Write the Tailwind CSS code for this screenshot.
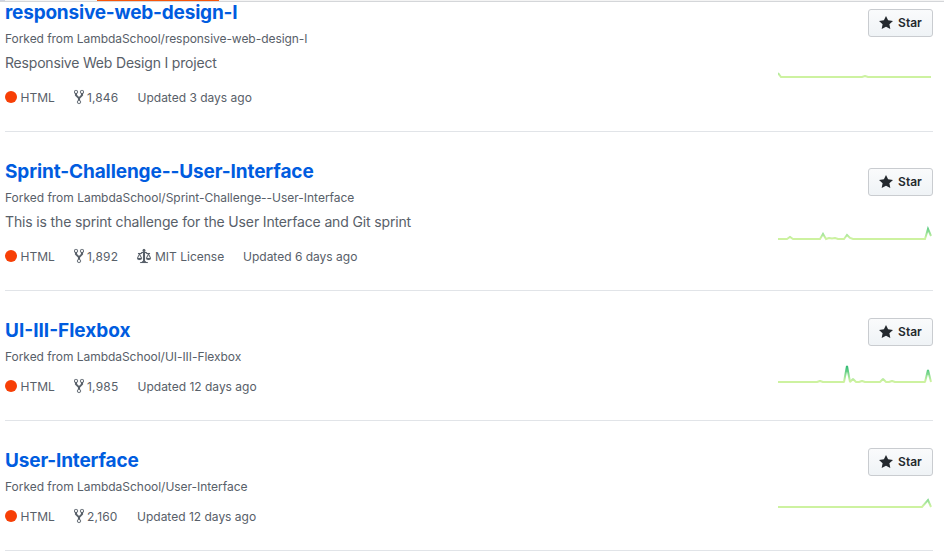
<!DOCTYPE html>
<html lang="en">
<head>
<meta charset="utf-8">
<title>Repositories</title>
<script src="https://cdn.jsdelivr.net/npm/@tailwindcss/browser@4"></script>
</head>
<body class="bg-white w-[944px] h-[553px] overflow-hidden font-['Inter','Liberation_Sans',sans-serif] text-[#586069]">
<svg class="hidden" aria-hidden="true">
  <symbol id="fork" viewBox="0 0 10 16"><path fill="currentColor" stroke="currentColor" stroke-width="0.1" fill-rule="evenodd" d="M8 1a1.993 1.993 0 00-1 3.72V6L5 8 3 6V4.72A1.993 1.993 0 002 1a1.993 1.993 0 00-1 3.72V6.5l3 3v1.78A1.993 1.993 0 005 15a1.993 1.993 0 001-3.72V9.5l3-3V4.72A1.993 1.993 0 008 1zM2 4.2C1.34 4.2.8 3.65.8 3c0-.65.55-1.2 1.2-1.2.65 0 1.2.55 1.2 1.2 0 .65-.55 1.2-1.2 1.2zm3 10c-.66 0-1.2-.55-1.2-1.2 0-.65.55-1.2 1.2-1.2.65 0 1.2.55 1.2 1.2 0 .65-.55 1.2-1.2 1.2zm3-10c-.66 0-1.2-.55-1.2-1.2 0-.65.55-1.2 1.2-1.2.65 0 1.2.55 1.2 1.2 0 .65-.55 1.2-1.2 1.2z"/></symbol>
  <symbol id="law" viewBox="0 0 14 16"><path fill="currentColor" stroke="currentColor" stroke-width="0.1" fill-rule="evenodd" d="M7 4c-.83 0-1.5-.67-1.5-1.5S6.17 1 7 1s1.5.67 1.5 1.5S7.83 4 7 4zm7 6c0 1.11-.89 2-2 2h-1c-1.11 0-2-.89-2-2l2-4h-1c-.55 0-1-.45-1-1H8v8c.42 0 1 .45 1 1h1c.42 0 1 .45 1 1H3c0-.55.58-1 1-1h1c0-.55.58-1 1-1h.03L6 5H5c0 .55-.45 1-1 1H3l2 4c0 1.11-.89 2-2 2H2c-1.11 0-2-.89-2-2l2-4H1V5h3c0-.55.45-1 1-1h4c.55 0 1 .45 1 1h3v1h-1l2 4zM2.5 7L1 10h3L2.5 7zM13 10l-1.5-3-1.5 3h3z"/></symbol>
  <symbol id="star" viewBox="0 0 14 16"><path fill="currentColor" d="M14 6l-4.9-.64L7 1 4.9 5.36 0 6l3.6 3.26L2.67 14 7 11.67 11.33 14l-.93-4.74L14 6z"/></symbol>
</svg>
<svg class="absolute size-0" aria-hidden="true"><defs>
  <linearGradient id="heat" gradientUnits="userSpaceOnUse" x1="0" y1="28" x2="0" y2="10"><stop offset="0.1" stop-color="#cdf2a0"/><stop offset="0.33" stop-color="#a5e59b"/><stop offset="0.8" stop-color="#45c47c"/><stop offset="1" stop-color="#2fb672"/></linearGradient>
</defs></svg>
<header class="h-[2px] flex items-start border-b border-[#d4d6d9] bg-[#f4f4f4]"><div class="w-[5px] h-[1px] bg-[#cfd3e0]"></div><div class="ml-[92px] w-[122px] h-[1px] bg-[#f9560b]"></div></header>
<main class="ml-[5px] w-[928px] text-[12px] leading-[18px]">
  <article class="h-[130px] flex justify-between border-b border-[#e1e4e8]">
    <div class="-mt-[5px]">
      <h3 class="text-[19px] leading-[32px] font-bold tracking-[-0.2px] text-[#005cdf]">responsive-web-design-I</h3>
      <p class="mt-[1px] tracking-[-0.05px]">Forked from LambdaSchool/responsive-web-design-I</p>
      <p class="mt-[4px] text-[14px] leading-[21px] tracking-[-0.19px]">Responsive Web Design I project</p>
      <div class="mt-[16px] flex items-center">
        <i class="size-3 -mt-[2px] rounded-full bg-[#f73f06]"></i><span class="ml-[3.5px] w-[53.5px]">HTML</span>
        <svg class="w-[10px] h-4 -mt-[2px]"><use href="#fork"/></svg><span class="ml-[3px] w-[50.5px] tracking-[0.1px]">1,846</span>
        <span>Updated 3 days ago</span>
      </div>
    </div>
    <div class="flex flex-col items-end pt-[7px]">
      <button class="flex items-center justify-center gap-[5px] w-[65px] h-7 border border-[#c9ccd0] rounded-[3px] bg-linear-to-b from-[#fafbfc] to-[#eff3f6] font-semibold text-[#24292e]"><svg class="w-[14px] h-4"><use href="#star"/></svg><span>Star</span></button>
      <svg class="w-[155px] h-[30px] mt-[13px]" fill="none" stroke="url(#heat)" stroke-width="2"><path d="M0 23L3 27H84L87 26L90 27H153"/></svg>
    </div>
  </article>
  <article class="h-[159px] flex justify-between border-b border-[#e1e4e8]">
    <div class="pt-6">
      <h3 class="text-[19px] leading-[32px] font-bold tracking-[-0.11px] text-[#005cdf]">Sprint-Challenge--User-Interface</h3>
      <p class="mt-[1px] tracking-[-0.02px]">Forked from LambdaSchool/Sprint-Challenge--User-Interface</p>
      <p class="mt-[4px] text-[14px] leading-[21px] tracking-[-0.145px]">This is the sprint challenge for the User Interface and Git sprint</p>
      <div class="mt-[16px] flex items-center">
        <i class="size-3 -mt-[2px] rounded-full bg-[#f73f06]"></i><span class="ml-[3.5px] w-[53.5px]">HTML</span>
        <svg class="w-[10px] h-4 -mt-[2px]"><use href="#fork"/></svg><span class="ml-[3px] w-[50px] tracking-[0.2px]">1,892</span>
        <svg class="w-[14px] h-4 -mt-[2px]"><use href="#law"/></svg><span class="ml-1 w-[88px]">MIT License</span>
        <span>Updated 6 days ago</span>
      </div>
    </div>
    <div class="flex flex-col items-end pt-9">
      <button class="flex items-center justify-center gap-[5px] w-[65px] h-7 border border-[#c9ccd0] rounded-[3px] bg-linear-to-b from-[#fafbfc] to-[#eff3f6] font-semibold text-[#24292e]"><svg class="w-[14px] h-4"><use href="#star"/></svg><span>Star</span></button>
      <svg class="w-[155px] h-[30px] mt-[16px]" fill="none" stroke="url(#heat)" stroke-width="2"><path d="M0 27H9L12 25L15 27H42L45 22L48 27L51 26L54 26.5L57 26L60 27H66L69 23L72 26L75 27H147L150 17L153 24"/></svg>
    </div>
  </article>
  <article class="h-[130px] flex justify-between border-b border-[#e1e4e8]">
    <div class="pt-6">
      <h3 class="text-[19px] leading-[32px] font-bold text-[#005cdf]">UI-III-Flexbox</h3>
      <p class="mt-[1px] tracking-[-0.05px]">Forked from LambdaSchool/UI-III-Flexbox</p>
      <div class="mt-[12px] flex items-center">
        <i class="size-3 -mt-[2px] rounded-full bg-[#f73f06]"></i><span class="ml-[3.5px] w-[53.5px]">HTML</span>
        <svg class="w-[10px] h-4 -mt-[2px]"><use href="#fork"/></svg><span class="ml-[3px] w-[50.5px] tracking-[0.2px]">1,985</span>
        <span>Updated 12 days ago</span>
      </div>
    </div>
    <div class="flex flex-col items-end pt-[27px]">
      <button class="flex items-center justify-center gap-[5px] w-[65px] h-7 border border-[#c9ccd0] rounded-[3px] bg-linear-to-b from-[#fafbfc] to-[#eff3f6] font-semibold text-[#24292e]"><svg class="w-[14px] h-4"><use href="#star"/></svg><span>Star</span></button>
      <svg class="w-[155px] h-[30px] mt-[9px]" fill="none" stroke="url(#heat)" stroke-width="2" stroke-linejoin="bevel"><path d="M0 27H39L42 26L45 27H66L69 11L72 27L75 24L78 27H81L84 26L87 27H102L105 24L108 27H111L114 26L117 27H147L150 15L153 27"/></svg>
    </div>
  </article>
  <article class="h-[130px] flex justify-between border-b border-[#e1e4e8]">
    <div class="pt-6">
      <h3 class="text-[19px] leading-[32px] font-bold tracking-[-0.16px] text-[#005cdf]">User-Interface</h3>
      <p class="mt-[1px] tracking-[-0.03px]">Forked from LambdaSchool/User-Interface</p>
      <div class="mt-[12px] flex items-center">
        <i class="size-3 -mt-[2px] rounded-full bg-[#f73f06]"></i><span class="ml-[3.5px] w-[53.5px]">HTML</span>
        <svg class="w-[10px] h-4 -mt-[2px]"><use href="#fork"/></svg><span class="ml-[3px] w-[50px] tracking-[0.2px]">2,160</span>
        <span>Updated 12 days ago</span>
      </div>
    </div>
    <div class="flex flex-col items-end pt-[27px]">
      <button class="flex items-center justify-center gap-[5px] w-[65px] h-7 border border-[#c9ccd0] rounded-[3px] bg-linear-to-b from-[#fafbfc] to-[#eff3f6] font-semibold text-[#24292e]"><svg class="w-[14px] h-4"><use href="#star"/></svg><span>Star</span></button>
      <svg class="w-[155px] h-[30px] mt-[4px]" fill="none" stroke="url(#heat)" stroke-width="2"><path d="M0 27H144L150 20L153 27"/></svg>
    </div>
  </article>
</main>
</body>
</html>
